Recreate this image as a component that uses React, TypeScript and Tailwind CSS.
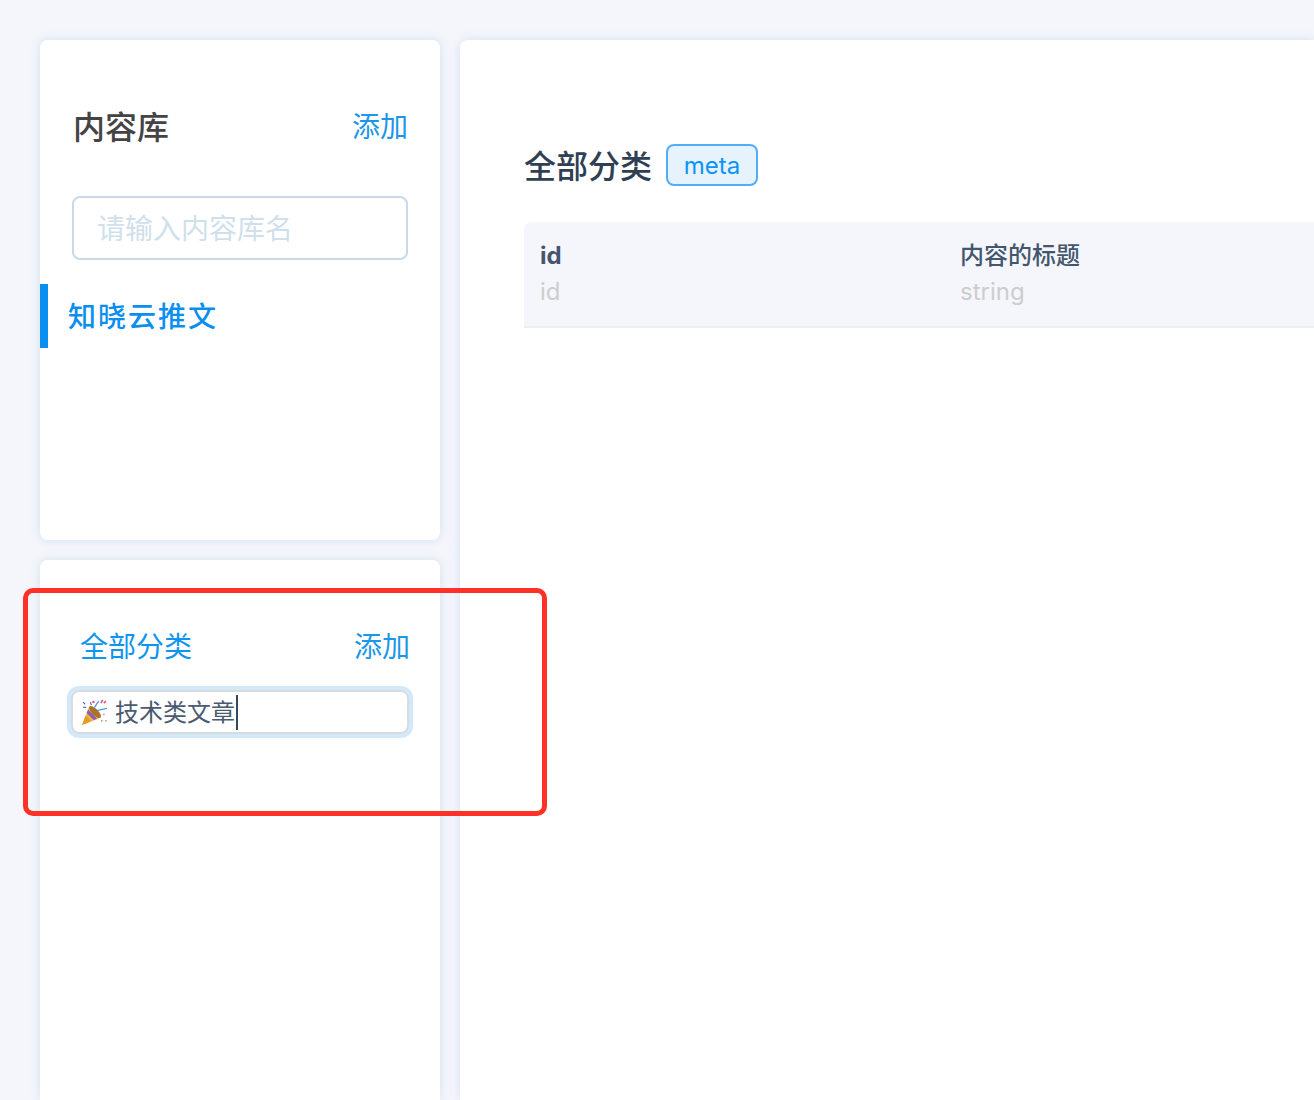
export default function App() {
  const font = { fontFamily: 'Inter, "Noto Sans CJK SC", sans-serif' };
  const Party = () => (
    <svg width="27" height="27" viewBox="0 0 26 26" className="shrink-0">
      <path d="M1 25 L8 7 L19 18 Z" fill="#f2b63c" />
      <path d="M1 25 L4.5 16 L10 21.5 Z" fill="#e59a2a" />
      <path d="M5.5 13.5 L6.8 10.2 L15.5 19 L12.2 20.3 Z" fill="#8e5bb5" />
      <ellipse cx="13.5" cy="12.5" rx="3" ry="7.6" transform="rotate(-45 13.5 12.5)" fill="#a9742a" />
      <path d="M13 8 L17 2 M16 11 L25 9" stroke="#4f9be8" strokeWidth="1.3" fill="none" />
      <path d="M19 4 L21 1 M22 4 L24 2" stroke="#e0577f" strokeWidth="1.6" fill="none" />
      <path d="M9 3 L10 6 M2 3 L4 5 M2 8 L5 8" stroke="#4a78d6" strokeWidth="1.2" fill="none" />
      <circle cx="12" cy="3" r="1.2" fill="#e0577f" />
      <circle cx="22" cy="15" r="1" fill="#e8a0a8" />
      <circle cx="24" cy="21" r="1" fill="#e8a0a8" />
      <circle cx="20" cy="21" r="0.9" fill="#8ec06c" />
    </svg>
  );
  return (
    <div style={font} className="relative flex h-[1100px] gap-5 overflow-hidden bg-[#f4f6fb] pl-10 pt-10">
      <div className="flex w-[400px] shrink-0 flex-col gap-5">
        <section className="flex h-[500px] shrink-0 flex-col rounded-lg bg-white pt-[64px] shadow-[0_0_10px_rgba(190,210,235,0.6)]">
          <div className="flex h-[46px] items-center justify-between pl-[33px] pr-8">
            <h2 className="pt-px text-[32px] font-medium leading-none text-[#444444]">内容库</h2>
            <span className="text-[28px] leading-none text-[#1b96e8]">添加</span>
          </div>
          <div className="ml-8 mr-8 mt-[46px] flex h-16 items-center rounded-lg border-2 border-[#c8dae9] pl-[23px] pt-[2px] text-[28px] text-[#cfdfeb]">
            请输入内容库名
          </div>
          <div className="mt-6 flex h-16 items-center border-l-8 border-[#0a8ff0] pl-5 pt-[2px] text-[28px] font-medium tracking-[2px] text-[#0a8ff0]">
            知晓云推文
          </div>
        </section>
        <section className="min-h-0 flex-1 rounded-t-lg bg-white pt-[64px] shadow-[0_0_10px_rgba(190,210,235,0.6)]">
          <div className="flex h-[46px] items-center justify-between pl-10 pr-[30px]">
            <span className="text-[28px] leading-none text-[#0f94ef]">全部分类</span>
            <span className="text-[28px] leading-none text-[#1b96e8]">添加</span>
          </div>
          <div className="ml-[31px] mr-[31px] mt-5 flex h-[44px] items-center rounded-lg border-2 border-[#d9dadb] pl-2 shadow-[0_0_0_4px_#d2e9fb]">
            <Party />
            <span className="ml-[7px] pt-[2px] text-2xl leading-none text-[#4a5b70]">技术类文章</span>
            <span className="ml-px h-[35px] w-[2px] bg-[#34495e]" />
          </div>
        </section>
      </div>
      <main className="min-w-0 flex-1 rounded-tl-lg bg-white pl-16 pt-[104px] shadow-[0_0_10px_rgba(190,210,235,0.6)]">
        <div className="flex h-[42px] items-center">
          <h1 className="pt-[3px] text-[32px] font-medium leading-none text-[#2f4054]">全部分类</h1>
          <span className="ml-[14px] flex h-[42px] w-[92px] items-center justify-center rounded-lg border-2 border-[#50aef5] bg-[#e6f3fd] pt-[2px] text-2xl text-[#0a94f8]">meta</span>
        </div>
        <div className="mt-9 flex h-[106px] w-[1000px] rounded-tl-lg border-b-2 border-[#eeeeee] bg-[#f5f6fb] pl-4 pt-[16px] text-2xl leading-9">
          <div className="w-[420px]">
            <div className="font-bold text-[#44566d]">id</div>
            <div className="text-[#cdcdcd]">id</div>
          </div>
          <div>
            <div className="font-medium text-[#44566d]">内容的标题</div>
            <div className="text-[#cdcdcd]">string</div>
          </div>
        </div>
      </main>
      <div className="absolute left-[23px] top-[588px] h-[228px] w-[524px] rounded-[10px] border-[5px] border-[#ff3025]" />
    </div>
  );
}
